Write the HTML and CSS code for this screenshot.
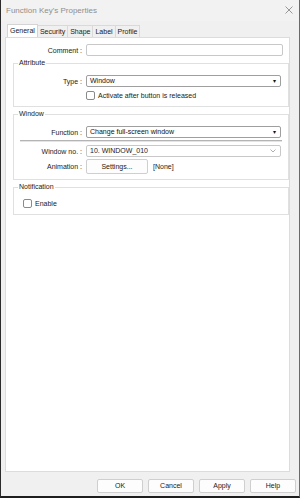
FILE: index.html
```html
<!DOCTYPE html>
<html>
<head>
  <meta charset="UTF-8">
  <title>Function Key's Properties</title>
  <meta name="viewport" content="width=device-width, initial-scale=1">
  <link rel="stylesheet" href="styles.css">
</head>
<body>
  <div class="window">
    <div class="titlebar">
      <span class="title">Function Key's Properties</span>
      <svg class="close" width="8" height="8" viewBox="0 0 8 8">
        <path d="M0.5 0.5 L7.5 7.5 M7.5 0.5 L0.5 7.5" stroke="#8c8c8c" stroke-width="0.9" fill="none"/>
      </svg>
    </div>

    <div class="tabs">
      <span class="tab active">General</span>
      <span class="tab">Security</span>
      <span class="tab">Shape</span>
      <span class="tab">Label</span>
      <span class="tab">Profile</span>
    </div>

    <div class="panel">
      <div class="row first">
        <span class="lbl outer">Comment :</span>
        <div class="field comment"></div>
      </div>

      <fieldset class="group">
        <legend>Attribute</legend>
        <div class="row type-row">
          <span class="lbl">Type :</span>
          <div class="field select dark">Window<span class="caret">&#9662;</span></div>
        </div>
        <div class="check indent">
          <span class="box"></span>Activate after button is released
        </div>
      </fieldset>

      <fieldset class="group">
        <legend>Window</legend>
        <div class="row func-row">
          <span class="lbl">Function :</span>
          <div class="field select dark">Change full-screen window<span class="caret">&#9662;</span></div>
        </div>
        <div class="sep"></div>
        <div class="row winno-row">
          <span class="lbl">Window no. :</span>
          <div class="field select">10. WINDOW_010
            <svg class="chev" width="6" height="4" viewBox="0 0 6 4"><path d="M0.5 0.5 L3 3 L5.5 0.5" stroke="#9a9a9a" stroke-width="0.8" fill="none"/></svg>
          </div>
        </div>
        <div class="row anim-row">
          <span class="lbl">Animation :</span>
          <div class="btn settings">Settings...</div>
          <span class="none">[None]</span>
        </div>
      </fieldset>

      <fieldset class="group">
        <legend>Notification</legend>
        <div class="check notify">
          <span class="box"></span>Enable
        </div>
      </fieldset>
    </div>

    <div class="footer">
      <div class="btn">OK</div>
      <div class="btn">Cancel</div>
      <div class="btn">Apply</div>
      <div class="btn">Help</div>
    </div>
  </div>
</body>
</html>
```

FILE: styles.css
```css
body {
  margin: 0;
  background: #fff;
  font-family: "Liberation Sans", Arial, sans-serif;
  font-size: 7px;
  color: #1a1a1a;
}
.window {
  width: 300px;
  height: 498px;
  box-sizing: border-box;
  background: #f0f0f0;
  border-left: 1px solid #2b2b2b;
  border-right: 1px solid #6a6a6a;
  border-bottom: 2px solid #1e1e1e;
  display: flex;
  flex-direction: column;
}
.titlebar {
  height: 21px;
  flex: none;
  display: flex;
  align-items: center;
  justify-content: space-between;
  padding: 0 6px 0 5px;
  background: #f2f2f2;
}
.title {
  font-size: 8px;
  color: #8f8f8f;
}
.close {
  display: block;
  margin-top: -1px;
}
.tabs {
  height: 16px;
  flex: none;
  display: flex;
  align-items: flex-end;
  padding-left: 6px;
}
.tab {
  height: 11px;
  line-height: 11px;
  padding: 0 2px;
  margin-left: -1px;
  background: #f0f0f0;
  border: 1px solid #d9d9d9;
  border-bottom: none;
  color: #1a1a1a;
}
.tab.active {
  height: 12px;
  line-height: 12px;
  margin-left: 0;
  background: #fff;
  border-color: #d4d4d4;
  position: relative;
  z-index: 1;
}
.panel {
  flex: 1;
  margin: 0 9px 0 4px;
  background: #fff;
  border: 1px solid #dcdcdc;
  padding-top: 6px;
}
.row {
  display: flex;
  align-items: center;
  height: 12px;
}
.lbl {
  width: 68px;
  text-align: right;
  margin-right: 4px;
  flex: none;
}
.lbl.outer {
  width: 76px;
}
.field {
  height: 12px;
  box-sizing: border-box;
  border: 1px solid #c8c8c8;
  border-radius: 2px;
  background: #fff;
  padding-left: 3px;
  line-height: 10px;
}
.comment {
  width: 197px;
}
.select {
  width: 195px;
  display: flex;
  align-items: center;
  justify-content: space-between;
  padding-right: 4px;
}
.select.dark {
  border-color: #9f9f9f;
  color: #111;
}
.caret {
  font-size: 6px;
  line-height: 10px;
}
.chev {
  display: block;
}
.group {
  margin: 3px 0 0 7px;
  padding: 0;
  border: 1px solid #e0e0e0;
  min-width: 0;
}
.group legend {
  margin-left: 4px;
  padding: 0 1px;
  line-height: 8px;
  color: #1a1a1a;
}
.type-row {
  margin-top: 8px;
}
.check {
  display: flex;
  align-items: center;
  height: 11px;
}
.indent {
  margin: 3px 0 5px 72px;
}
.box {
  width: 9px;
  height: 9px;
  box-sizing: border-box;
  border: 1px solid #8a8a8a;
  border-radius: 2px;
  margin-right: 3px;
  background: #fff;
}
.func-row {
  margin-top: 8px;
}
.sep {
  margin: 2px 6px 0 6px;
  height: 1px;
  background: #b4b4b4;
  border-bottom: 1px solid #e4e4e4;
}
.winno-row {
  margin-top: 3px;
}
.anim-row {
  height: 15px;
  margin: 2px 0 5px 0;
}
.btn {
  width: 46px;
  height: 14px;
  box-sizing: border-box;
  border: 1px solid #cfcfcf;
  border-radius: 2px;
  background: #fdfdfd;
  text-align: center;
  line-height: 12px;
  color: #1a1a1a;
}
.settings {
  width: 62px;
  height: 15px;
  line-height: 13px;
}
.none {
  margin-left: 5px;
}
.notify {
  margin: 7px 0 5px 9px;
}
.footer {
  height: 24px;
  flex: none;
  display: flex;
  justify-content: flex-end;
  gap: 5px;
  padding: 7px 3px 0 0;
  box-sizing: border-box;
}
```
